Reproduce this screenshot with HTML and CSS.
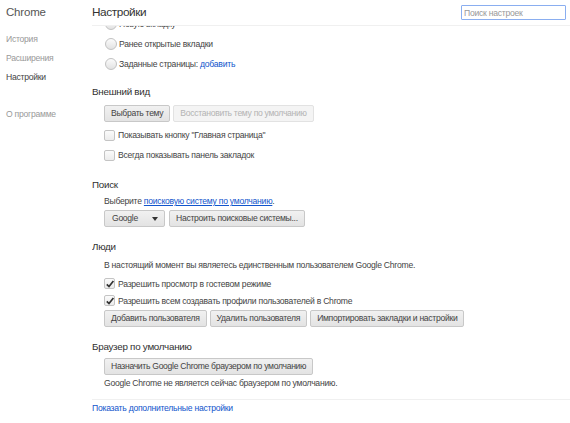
FILE: index.html
```html
<!DOCTYPE html>
<html lang="ru">
<head>
<meta charset="utf-8">
<title>Настройки</title>
<link rel="stylesheet" href="styles.css">
</head>
<body>
<div class="page">
  <nav class="sidebar">
    <div class="brand">Chrome</div>
    <ul class="nav">
      <li class="nav-item">История</li>
      <li class="nav-item">Расширения</li>
      <li class="nav-item active">Настройки</li>
      <li class="nav-item gap">О программе</li>
    </ul>
  </nav>
  <main class="main">
    <header class="header">
      <h1 class="title">Настройки</h1>
      <input class="search" type="text" placeholder="Поиск настроек">
    </header>
    <div class="viewport">
      <div class="content">
        <section class="section startup">
          <label class="row"><span class="radio"></span>Новую вкладку</label>
          <label class="row"><span class="radio"></span>Ранее открытые вкладки</label>
          <label class="row"><span class="radio"></span>Заданные страницы:&nbsp;<a class="link">добавить</a></label>
        </section>

        <section class="section appearance">
          <h3 class="heading">Внешний вид</h3>
          <div class="indent">
            <div class="btns">
              <button class="btn">Выбрать тему</button>
              <button class="btn disabled">Восстановить тему по умолчанию</button>
            </div>
            <label class="row"><span class="check"></span>Показывать кнопку "Главная страница"</label>
            <label class="row"><span class="check"></span>Всегда показывать панель закладок</label>
          </div>
        </section>

        <section class="section search-sec">
          <h3 class="heading">Поиск</h3>
          <div class="indent">
            <p class="text">Выберите <a class="link u">поисковую систему по умолчанию</a>.</p>
            <div class="btns">
              <span class="select">Google<span class="arrow"></span></span>
              <button class="btn">Настроить поисковые системы...</button>
            </div>
          </div>
        </section>

        <section class="section people">
          <h3 class="heading">Люди</h3>
          <div class="indent">
            <p class="text">В настоящий момент вы являетесь единственным пользователем Google Chrome.</p>
            <label class="row short"><span class="check on"><svg viewBox="0 0 12 12" width="12" height="12"><path d="M2.8 6.3 L5 8.5 L9.4 3" fill="none" stroke="#333" stroke-width="1.7"/></svg></span>Разрешить просмотр в гостевом режиме</label>
            <label class="row short"><span class="check on"><svg viewBox="0 0 12 12" width="12" height="12"><path d="M2.8 6.3 L5 8.5 L9.4 3" fill="none" stroke="#333" stroke-width="1.7"/></svg></span>Разрешить всем создавать профили пользователей в Chrome</label>
            <div class="btns">
              <button class="btn">Добавить пользователя</button>
              <button class="btn">Удалить пользователя</button>
              <button class="btn">Импортировать закладки и настройки</button>
            </div>
          </div>
        </section>

        <section class="section default">
          <h3 class="heading">Браузер по умолчанию</h3>
          <div class="indent">
            <div class="btns">
              <button class="btn">Назначить Google Chrome браузером по умолчанию</button>
            </div>
            <p class="text">Google Chrome не является сейчас браузером по умолчанию.</p>
          </div>
        </section>

        <footer class="footer">
          <a class="link">Показать дополнительные настройки</a>
        </footer>
      </div>
    </div>
  </main>
</div>
</body>
</html>
```
FILE: styles.css
```css
* { box-sizing: border-box; }
html, body { margin: 0; padding: 0; background: #fff; }
body {
  font-family: "Liberation Sans", Arial, sans-serif;
  font-size: 8.6px;
  letter-spacing: -0.25px;
  color: #303030;
  width: 570px;
  height: 423px;
  overflow: hidden;
}
.page { display: flex; height: 423px; }

.sidebar { width: 92px; flex: none; padding: 4px 0 0 6px; }
.brand { font-size: 11.5px; letter-spacing: -0.2px; color: #555; height: 26px; line-height: 16px; }
.nav { list-style: none; margin: 0; padding: 0; }
.nav-item { color: #999; height: 19px; line-height: 19px; }
.nav-item.active { color: #444; }
.nav-item.gap { margin-top: 18px; }

.main { flex: 1; display: flex; flex-direction: column; min-width: 0; }
.header {
  height: 26px; flex: none;
  display: flex; align-items: flex-start; justify-content: space-between;
  border-bottom: 1px solid #f0f0f0;
  padding: 4px 4px 0 0;
}
.title { margin: 0; font-size: 11.8px; letter-spacing: -0.4px; font-weight: normal; color: #333; line-height: 16px; }
.search {
  width: 105px; height: 15px; margin-top: 1px;
  border: 1px solid #8aaef0; border-radius: 1px;
  font-family: inherit; font-size: 8.6px; letter-spacing: -0.25px; padding: 0 2px;
  outline: none; color: #333;
}
.search::placeholder { color: #999; }

.viewport { flex: 1; overflow: hidden; }
.content { margin-top: -12px; }

.startup { padding-left: 12px; }
.heading { margin: 0; font-size: 9.8px; letter-spacing: -0.25px; font-weight: normal; color: #303030; height: 16px; line-height: 16px; }
.indent { padding-left: 12px; }

.appearance { margin-top: 10px; }
.search-sec { margin-top: 12px; }
.people { margin-top: 12px; }
.default { margin-top: 12px; }

.row { display: flex; align-items: center; height: 20px; color: #444; }
.row.short { height: 17px; }
.radio {
  width: 12px; height: 12px; border-radius: 50%;
  border: 1px solid #c2c2c2;
  background: linear-gradient(#fbfbfb, #e2e2e2);
  margin: 0 2px 0 1px; flex: none;
}
.check {
  width: 11px; height: 11px; border-radius: 2px;
  border: 1px solid #c4c4c4;
  background: linear-gradient(#fbfbfb, #ececec);
  margin-right: 3px; flex: none; position: relative;
}
.check svg { position: absolute; left: -1px; top: -1px; }
.link { color: #15c; text-decoration: none; }
.link.u { text-decoration: underline; }

.text { margin: 0; height: 16px; line-height: 16px; color: #444; }

.btns { display: flex; gap: 4px; }
.appearance .btns { margin-top: 5px; margin-bottom: 3px; gap: 3px; }
.search-sec .btns { margin-top: 1px; }
.people .text { margin-top: 2px; margin-bottom: 2px; }
.people .btns { margin-top: 1px; gap: 3px; }
.default .btns { margin-top: 3px; }

.btn, .select {
  height: 17px; padding: 0 6px;
  font-family: inherit; font-size: 8.6px; letter-spacing: -0.3px; color: #444;
  border: 1px solid #c8c8c8; border-radius: 2px;
  background: linear-gradient(#f1f1f1, #e3e3e3);
  line-height: 15px;
}
.btn.disabled { color: #b3b3b3; background: #f4f4f4; border-color: #e2e2e2; }
.select { display: inline-flex; align-items: center; width: 61px; padding: 0 6px 0 7px; justify-content: space-between; }
.arrow { width: 0; height: 0; border-left: 3.5px solid transparent; border-right: 3.5px solid transparent; border-top: 4px solid #333; }

.footer { margin-top: 8px; border-top: 1px solid #f0f0f0; padding-top: 3px; height: 24px; }
```
